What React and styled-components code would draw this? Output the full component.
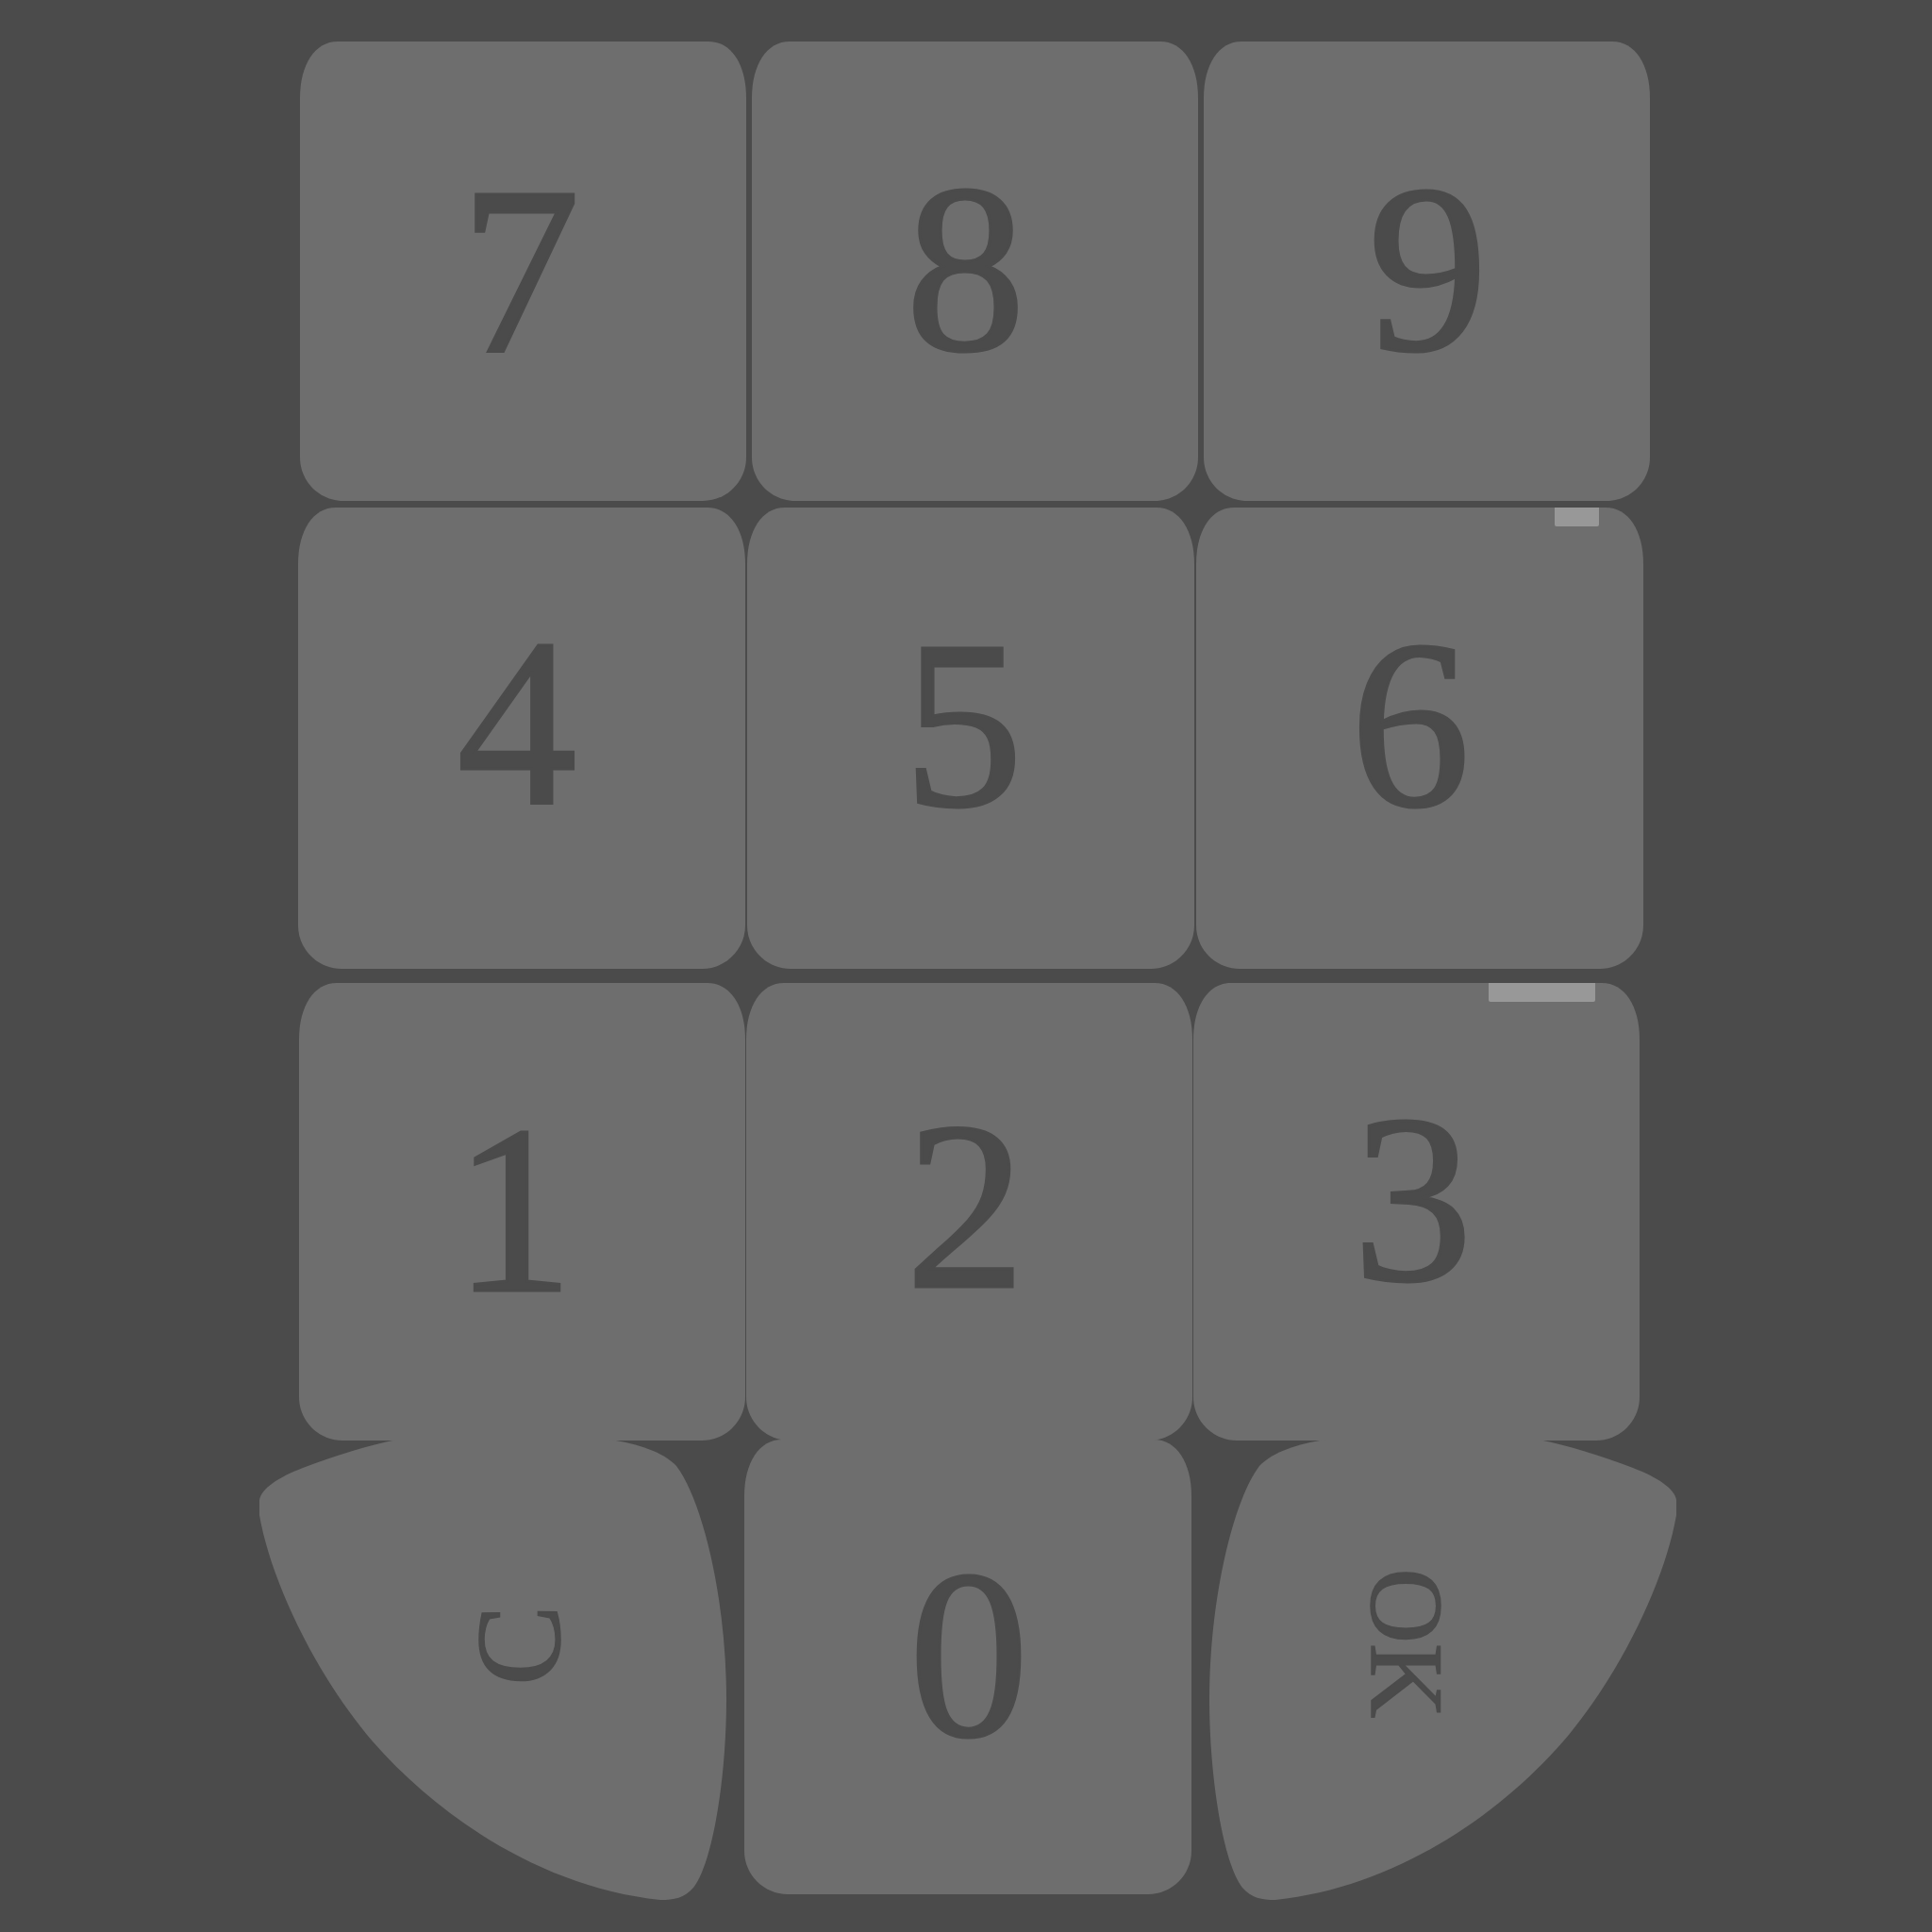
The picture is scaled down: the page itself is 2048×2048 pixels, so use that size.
import React from "react";
import styled, { createGlobalStyle } from "styled-components";

const Global = createGlobalStyle`
  html, body {
    margin: 0;
    padding: 0;
    background: #4b4b4b;
  }
  #root {
    width: 2048px;
    min-height: 2048px;
  }
`;

const r2 = (v) => Math.round(v * 100) / 100;

/* rounded key outline: squarer top corners, rounder bottom corners */
const keyPath = (w, h) => {
  const ta = 40, tb = 60, tk = 0.6;
  const ba = 46, bb = 46, bk = 0.55;
  const n = [
    ["M", ta, 0],
    ["L", w - ta, 0],
    ["C", w - ta + ta * tk, 0, w, tb - tb * tk, w, tb],
    ["L", w, h - bb],
    ["C", w, h - bb + bb * bk, w - ba + ba * bk, h, w - ba, h],
    ["L", ba, h],
    ["C", ba - ba * bk, h, 0, h - bb + bb * bk, 0, h - bb],
    ["L", 0, tb],
    ["C", 0, tb - tb * tk, ta - ta * tk, 0, ta, 0],
    ["Z"],
  ];
  return n.map(([c, ...v]) => [c, ...v.map(r2)].join(" ")).join(" ");
};

const Pad = styled.div`
  width: 2048px;
  height: 2048px;
  box-sizing: border-box;
  padding: 44px 0 0 317px;
  display: flex;
  flex-direction: column;
  background: #4b4b4b;
`;

const Row = styled.div`
  display: flex;
  gap: ${(p) => p.$gap}px;
  margin-top: ${(p) => p.$top}px;
  margin-left: ${(p) => p.$shift}px;
  height: ${(p) => p.$h}px;
`;

const Key = styled.button`
  position: relative;
  flex: none;
  width: ${(p) => p.$w}px;
  height: ${(p) => p.$h}px;
  margin: 0;
  padding: 0;
  border: 0;
  background: #6e6e6e;
  clip-path: path("${(p) => keyPath(p.$w, p.$h)}");
  display: flex;
  align-items: center;
  justify-content: center;
  color: #4b4b4b;
  font-family: "Liberation Serif", "Times New Roman", serif;
  font-size: 254px;
  line-height: 1;
  -webkit-text-stroke: 3px #4b4b4b;
  cursor: pointer;
`;

const Digit = styled.span`
  display: block;
  transform: translate(${(p) => p.$dx}px, ${(p) => p.$dy}px);
`;

const Smudge = styled.span`
  position: absolute;
  top: 0;
  left: ${(p) => p.$left}px;
  width: ${(p) => p.$width}px;
  height: ${(p) => p.$height}px;
  background: #989898;
  border-radius: 0 0 2px 2px;
`;

const pickCmds = [
  ["M", 0, 64],
  ["C", 2, 52, 20, 40, 46, 30],
  ["C", 80, 17, 115, 6, 146, 0],
  ["L", 371, 0],
  ["C", 400, 4, 428, 13, 442, 28],
  ["C", 470, 65, 495, 170, 495, 275],
  ["C", 495, 360, 480, 450, 460, 475],
  ["C", 450, 486, 440, 488, 425, 488],
  ["C", 300, 475, 190, 400, 120, 320],
  ["C", 60, 250, 12, 150, 0, 80],
  ["Z"],
];

const pickPath = (mirror, w) =>
  pickCmds
    .map(([c, ...n]) =>
      [c, ...n.map((v, i) => (i % 2 === 0 && mirror ? w - v : v))].join(" ")
    )
    .join(" ");

const PICK_W = 496;
const PICK_H = 488;
const LEFT_PICK = pickPath(false, PICK_W);
const RIGHT_PICK = pickPath(true, PICK_W);

const Pick = styled.button`
  flex: none;
  width: ${PICK_W}px;
  height: ${PICK_H}px;
  margin: 0;
  border: 0;
  box-sizing: border-box;
  padding: ${(p) => p.$pad};
  background: #6e6e6e;
  clip-path: path("${(p) => (p.$mirror ? RIGHT_PICK : LEFT_PICK)}");
  display: flex;
  align-items: center;
  justify-content: center;
  color: #4b4b4b;
  font-family: "Liberation Serif", "Times New Roman", serif;
  line-height: 1;
  -webkit-text-stroke: 1.5px #4b4b4b;
  cursor: pointer;
`;

const PickLabel = styled.span`
  display: block;
  white-space: nowrap;
  font-size: ${(p) => p.$size}px;
  transform: rotate(${(p) => p.$rot}deg);
`;

const rows = [
  {
    top: 0,
    shift: 1,
    gap: 6,
    h: 487,
    w: 473,
    keys: [
      { d: "7", dx: -3, dy: 0 },
      { d: "8", dx: -10, dy: -2 },
      { d: "9", dx: 1, dy: -2 },
    ],
  },
  {
    top: 7,
    shift: -1,
    gap: 2,
    h: 489,
    w: 474,
    keys: [
      { d: "4", dx: -5, dy: -16 },
      { d: "5", dx: -8, dy: -14 },
      { d: "6", dx: -10, dy: -14, smudge: { left: 380, width: 47, height: 20 } },
    ],
  },
  {
    top: 15,
    shift: 0,
    gap: 1,
    h: 485,
    w: 473,
    keys: [
      { d: "1", dx: -9, dy: -2 },
      { d: "2", dx: -4, dy: -6 },
      { d: "3", dx: -4, dy: -13, smudge: { left: 313, width: 113, height: 20 } },
    ],
  },
];

export default function App() {
  return (
    <>
      <Global />
      <Pad>
        {rows.map((r, ri) => (
          <Row key={ri} $top={r.top} $shift={r.shift} $gap={r.gap} $h={r.h}>
            {r.keys.map((k) => (
              <Key key={k.d} $w={r.w} $h={r.h}>
                {k.smudge && (
                  <Smudge
                    $left={k.smudge.left}
                    $width={k.smudge.width}
                    $height={k.smudge.height}
                  />
                )}
                <Digit $dx={k.dx} $dy={k.dy}>
                  {k.d}
                </Digit>
              </Key>
            ))}
          </Row>
        ))}
        <Row $top={-1} $shift={-42} $gap={18} $h={PICK_H}>
          <Pick $pad="0 0 52px 54px">
            <PickLabel $size={128} $rot={-90}>
              C
            </PickLabel>
          </Pick>
          <Key $w={474} $h={482}>
            <Digit $dx={1} $dy={-12}>
              0
            </Digit>
          </Key>
          <Pick $mirror $pad="0 76px 56px 0">
            <PickLabel $size={110} $rot={90}>
              OK
            </PickLabel>
          </Pick>
        </Row>
      </Pad>
    </>
  );
}
